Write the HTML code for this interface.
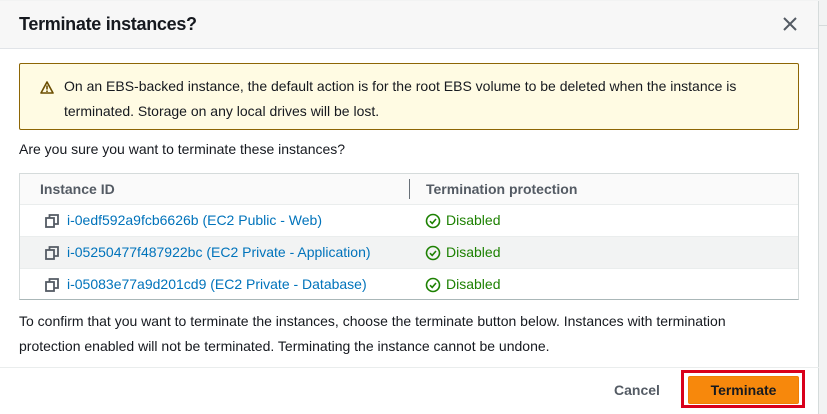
<!DOCTYPE html>
<html><head><meta charset="utf-8"><style>
*{box-sizing:border-box;margin:0;padding:0}
body{width:827px;height:414px;overflow:hidden;background:#f2f3f3;font-family:"Liberation Sans",sans-serif;color:#16191f;font-size:14px;position:relative}
.bgline{position:absolute;left:819px;top:25px;width:8px;height:1px;background:#d5dbdb}
.modal{position:absolute;left:0;top:1px;width:819px;height:413px;background:#fff;border-right:1px solid #d5dbdb}
.hdr{height:48px;background:#f7f7f7;border-bottom:1px solid #e1e4e8;position:relative}
.hdr h1{position:absolute;left:19px;top:13px;font-size:18px;font-weight:bold;letter-spacing:-0.3px}
.x{position:absolute;left:782px;top:15px}
.warn{position:absolute;left:19px;top:62px;width:780px;height:67px;background:#fffbe3;border:1px solid #8d6605;border-radius:2px}
.warn p{position:absolute;left:44px;top:10px;line-height:25px;width:700px}
.warn svg{position:absolute;left:20px;top:17px}
.q{position:absolute;left:19px;top:140px}
.tbl{position:absolute;left:19px;top:172px;width:780px;height:127px;border:1px solid #d5dbdb;border-bottom:1px solid #aab7b8}
.th{height:31px;background:#fafafa;border-bottom:1px solid #eaeded;position:relative;font-weight:bold;color:#545b64}
.th span{position:absolute;top:7px}
.sep{position:absolute;left:389px;top:5px;width:1px;height:20px;background:#687078}
.row{height:32px;position:relative;border-bottom:1px solid #eaeded}
.row:last-child{border-bottom:none}
.row.alt{background:#f2f3f3}
.row .id{position:absolute;left:47px;top:7px;color:#0073bb}
.row .cp{position:absolute;left:25px;top:9px}
.row .ok{position:absolute;left:405px;top:8px}
.row .dis{position:absolute;left:426px;top:7px;color:#1d8102}
.confirm{position:absolute;left:19px;top:308px;line-height:25px;width:725px}
.foot{position:absolute;left:0;top:366px;width:819px;height:1px;background:#eaeded}
.cancel{position:absolute;left:614px;top:381px;font-weight:bold;color:#545b64}
.red{position:absolute;left:681px;top:369px;width:124px;height:38px;border:3px solid #d9001b;background:#fff}
.btn{position:absolute;left:4px;top:3px;width:111px;height:28px;background:#f7880c;border:1px solid #f07d05;border-radius:2px;font-weight:bold;text-align:center;line-height:26px;color:#16191f}
</style></head><body>
<div class="bgline"></div>
<div class="modal">
<div class="hdr"><h1>Terminate instances?</h1>
<svg class="x" width="16" height="16" viewBox="0 0 16 16"><path d="M2 2L14 14M14 2L2 14" stroke="#545b64" stroke-width="2"/></svg></div>
<div class="warn"><svg width="14" height="13" viewBox="0 0 14 13"><path d="M7 1L13 12H1Z" fill="none" stroke="#6b4d00" stroke-width="1.6" stroke-linejoin="round"/><path d="M7 4.5V8.5M7 9.5V11" stroke="#6b4d00" stroke-width="1.6"/></svg>
<p>On an EBS-backed instance, the default action is for the root EBS volume to be deleted when the instance is terminated. Storage on any local drives will be lost.</p></div>
<div class="q">Are you sure you want to terminate these instances?</div>
<div class="tbl">
<div class="th"><span style="left:20px">Instance ID</span><div class="sep"></div><span style="left:406px">Termination protection</span></div>
<div class="row"><svg class="cp" width="14" height="14" viewBox="0 0 14 14"><rect x="1" y="4" width="8" height="9" fill="none" stroke="#545b64" stroke-width="1.8"/><path d="M4.5 4V1H13V10H9" fill="none" stroke="#545b64" stroke-width="1.8"/></svg><span class="id">i-0edf592a9fcb6626b (EC2 Public - Web)</span><svg class="ok" width="16" height="16" viewBox="0 0 16 16"><circle cx="8" cy="8" r="6.5" fill="none" stroke="#1d8102" stroke-width="1.6"/><path d="M5 8.2L7.2 10.4L11 6" fill="none" stroke="#1d8102" stroke-width="1.6"/></svg><span class="dis">Disabled</span></div>
<div class="row alt"><svg class="cp" width="14" height="14" viewBox="0 0 14 14"><rect x="1" y="4" width="8" height="9" fill="none" stroke="#545b64" stroke-width="1.8"/><path d="M4.5 4V1H13V10H9" fill="none" stroke="#545b64" stroke-width="1.8"/></svg><span class="id">i-05250477f487922bc (EC2 Private - Application)</span><svg class="ok" width="16" height="16" viewBox="0 0 16 16"><circle cx="8" cy="8" r="6.5" fill="none" stroke="#1d8102" stroke-width="1.6"/><path d="M5 8.2L7.2 10.4L11 6" fill="none" stroke="#1d8102" stroke-width="1.6"/></svg><span class="dis">Disabled</span></div>
<div class="row"><svg class="cp" width="14" height="14" viewBox="0 0 14 14"><rect x="1" y="4" width="8" height="9" fill="none" stroke="#545b64" stroke-width="1.8"/><path d="M4.5 4V1H13V10H9" fill="none" stroke="#545b64" stroke-width="1.8"/></svg><span class="id">i-05083e77a9d201cd9 (EC2 Private - Database)</span><svg class="ok" width="16" height="16" viewBox="0 0 16 16"><circle cx="8" cy="8" r="6.5" fill="none" stroke="#1d8102" stroke-width="1.6"/><path d="M5 8.2L7.2 10.4L11 6" fill="none" stroke="#1d8102" stroke-width="1.6"/></svg><span class="dis">Disabled</span></div>
</div>
<div class="confirm">To confirm that you want to terminate the instances, choose the terminate button below. Instances with termination protection enabled will not be terminated. Terminating the instance cannot be undone.</div>
<div class="foot"></div>
<div class="cancel">Cancel</div>
<div class="red"><div class="btn">Terminate</div></div>
</div>
</body></html>
